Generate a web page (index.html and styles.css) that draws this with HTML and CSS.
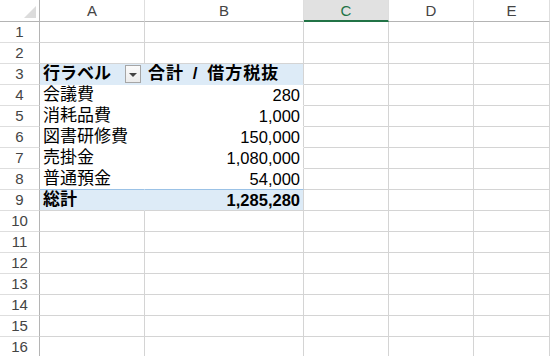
FILE: index.html
```html
<!DOCTYPE html>
<html lang="ja">
<head>
    <meta charset="UTF-8">
    <title>ピボットテーブル</title>
    <link rel="stylesheet" href="styles.css">
</head>
<body>
<div class="sheet">
    <!-- column headers -->
    <div class="hd corner"><span class="tri"></span></div>
    <div class="hd col">A</div>
    <div class="hd col">B</div>
    <div class="hd col sel">C</div>
    <div class="hd col">D</div>
    <div class="hd col">E</div>

    <div class="rh">1</div><div class="c"></div><div class="c"></div><div class="c"></div><div class="c"></div><div class="c"></div>
    <div class="rh">2</div><div class="c"></div><div class="c"></div><div class="c"></div><div class="c"></div><div class="c"></div>

    <div class="rh">3</div>
    <div class="c pa head"><span>行ラベル</span><span class="drop"></span></div>
    <div class="c pb head"><span class="field">合計 / 借方税抜</span></div>
    <div class="c"></div><div class="c"></div><div class="c"></div>

    <div class="rh">4</div>
    <div class="c pa">会議費</div><div class="c pb num">280</div>
    <div class="c"></div><div class="c"></div><div class="c"></div>

    <div class="rh">5</div>
    <div class="c pa">消耗品費</div><div class="c pb num">1,000</div>
    <div class="c"></div><div class="c"></div><div class="c"></div>

    <div class="rh">6</div>
    <div class="c pa">図書研修費</div><div class="c pb num">150,000</div>
    <div class="c"></div><div class="c"></div><div class="c"></div>

    <div class="rh">7</div>
    <div class="c pa">売掛金</div><div class="c pb num">1,080,000</div>
    <div class="c"></div><div class="c"></div><div class="c"></div>

    <div class="rh">8</div>
    <div class="c pa">普通預金</div><div class="c pb num">54,000</div>
    <div class="c"></div><div class="c"></div><div class="c"></div>

    <div class="rh">9</div>
    <div class="c pa total">総計</div><div class="c pb total num">1,285,280</div>
    <div class="c"></div><div class="c"></div><div class="c"></div>

    <div class="rh">10</div><div class="c"></div><div class="c"></div><div class="c"></div><div class="c"></div><div class="c"></div>
    <div class="rh">11</div><div class="c"></div><div class="c"></div><div class="c"></div><div class="c"></div><div class="c"></div>
    <div class="rh">12</div><div class="c"></div><div class="c"></div><div class="c"></div><div class="c"></div><div class="c"></div>
    <div class="rh">13</div><div class="c"></div><div class="c"></div><div class="c"></div><div class="c"></div><div class="c"></div>
    <div class="rh">14</div><div class="c"></div><div class="c"></div><div class="c"></div><div class="c"></div><div class="c"></div>
    <div class="rh">15</div><div class="c"></div><div class="c"></div><div class="c"></div><div class="c"></div><div class="c"></div>
    <div class="rh">16</div><div class="c"></div><div class="c"></div><div class="c"></div><div class="c"></div><div class="c"></div>
</div>
</body>
</html>
```

FILE: styles.css
```css
body {
    margin: 0;
    background: #fff;
    overflow: hidden;
    font-family: "Liberation Sans", "Noto Sans CJK JP", sans-serif;
    color: #000;
}
.sheet {
    display: grid;
    grid-template-columns: 40px 105px 159px 85px 85px 1fr;
    grid-template-rows: 22px;
    grid-auto-rows: 21px;
}
.sheet > div {
    box-sizing: border-box;
}
.hd {
    background: #fff;
    border-bottom: 1px solid #b4b4b4;
    border-right: 1px solid #dedede;
    color: #444;
    font-size: 15px;
    line-height: 21px;
    text-align: center;
}
.corner {
    position: relative;
    border-right: 1px solid #b4b4b4;
}
.tri {
    position: absolute;
    right: 3px;
    bottom: 3px;
    width: 0;
    height: 0;
    border-left: 12px solid transparent;
    border-bottom: 12px solid #dcdcdc;
}
.hd.sel {
    background: #e1e1e1;
    color: #217346;
    border-bottom: 2px solid #217346;
}
.rh {
    border-right: 1px solid #b4b4b4;
    border-bottom: 1px solid #dedede;
    color: #444;
    font-size: 15px;
    line-height: 20px;
    text-align: center;
}
.c {
    border-right: 1px solid #d4d4d4;
    border-bottom: 1px solid #d4d4d4;
    font-size: 17px;
    line-height: 20px;
    padding: 0 3px;
    white-space: nowrap;
    overflow: hidden;
}
.pa {
    border-right-color: transparent;
}
.pa, .pb {
    border-bottom-color: transparent;
}
.num {
    text-align: right;
    font-size: 16.5px;
}
.head {
    background: #ddebf7;
    font-weight: bold;
}
.field {
    letter-spacing: 1px;
    word-spacing: 3px;
}
.pa.head {
    display: flex;
    align-items: center;
}
.drop {
    margin-left: auto;
    width: 16px;
    height: 18px;
    box-sizing: border-box;
    border: 1px solid #a6a6a6;
    background: linear-gradient(#fbfbfb, #ececec);
    position: relative;
}
.drop::after {
    content: "";
    position: absolute;
    left: 3px;
    top: 7px;
    border-left: 4px solid transparent;
    border-right: 4px solid transparent;
    border-top: 4px solid #444;
}
.total {
    background: #ddebf7;
    font-weight: bold;
    border-top: 1px solid #9bc2e6;
    margin-top: -1px;
    line-height: 20px;
    border-bottom-color: #d4d4d4;
}
.pa.total {
    border-bottom-color: #d4d4d4;
}
```
